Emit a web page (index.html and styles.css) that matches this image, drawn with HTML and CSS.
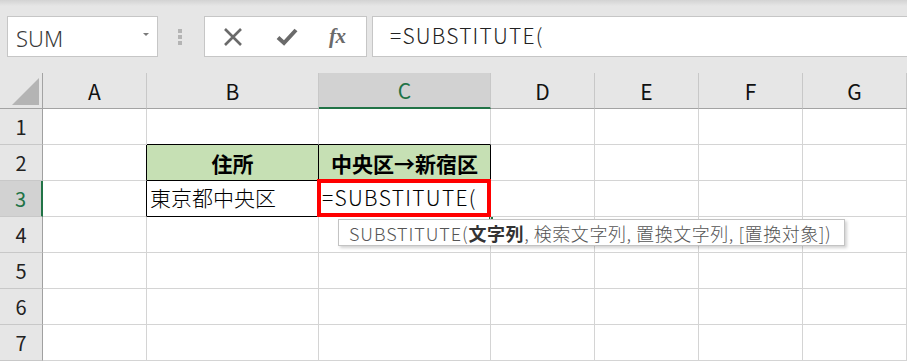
FILE: index.html
```html
<!DOCTYPE html>
<html lang="ja">
<head>
<meta charset="utf-8">
<title>SUBSTITUTE</title>
<link rel="stylesheet" href="styles.css">
</head>
<body>
<div class="app">
  <div class="toolbar">
    <div class="namebox"><span class="name">SUM</span><span class="dd"></span></div>
    <div class="grip"><i></i><i></i><i></i></div>
    <div class="fxbox">
      <svg class="ico" width="20" height="18" viewBox="0 0 20 18"><path d="M2 1 L18 17 M18 1 L2 17" stroke="#6a6a6a" stroke-width="2.6" fill="none"/></svg>
      <svg class="ico" width="22" height="18" viewBox="0 0 22 18"><path d="M2 9.5 L8 15 L20 2" stroke="#6a6a6a" stroke-width="4" fill="none" stroke-linejoin="miter"/></svg>
      <span class="fx">fx</span>
    </div>
    <div class="formula">=SUBSTITUTE(</div>
  </div>
  <div class="sheet">
    <div class="c hd corner"><div class="tri"></div></div>
    <div class="c hd">A</div>
    <div class="c hd">B</div>
    <div class="c hd sel">C</div>
    <div class="c hd">D</div>
    <div class="c hd">E</div>
    <div class="c hd">F</div>
    <div class="c hd">G</div>

    <div class="c rh">1</div>
    <div class="c"></div>
    <div class="c bb"></div>
    <div class="c bb"></div>
    <div class="c"></div><div class="c"></div><div class="c"></div><div class="c"></div>

    <div class="c rh">2</div>
    <div class="c br"></div>
    <div class="c tb th">住所</div>
    <div class="c tb th">中央区→新宿区</div>
    <div class="c"></div><div class="c"></div><div class="c"></div><div class="c"></div>

    <div class="c rh rsel">3</div>
    <div class="c br"></div>
    <div class="c tb td">東京都中央区</div>
    <div class="c tb td active"><span class="lat">=SUBSTITUTE(</span><span class="redbox"></span><span class="handle"></span></div>
    <div class="c"></div><div class="c"></div><div class="c"></div><div class="c"></div>

    <div class="c rh">4</div>
    <div class="c"></div><div class="c"></div><div class="c"></div><div class="c"></div><div class="c"></div><div class="c"></div><div class="c"></div>
    <div class="c rh">5</div>
    <div class="c"></div><div class="c"></div><div class="c"></div><div class="c"></div><div class="c"></div><div class="c"></div><div class="c"></div>
    <div class="c rh">6</div>
    <div class="c"></div><div class="c"></div><div class="c"></div><div class="c"></div><div class="c"></div><div class="c"></div><div class="c"></div>
    <div class="c rh">7</div>
    <div class="c"></div><div class="c"></div><div class="c"></div><div class="c"></div><div class="c"></div><div class="c"></div><div class="c"></div>

    <div class="tip"><span class="lat">SUBSTITUTE(</span><b>文字列</b>, 検索文字列, 置換文字列, [置換対象])</div>
  </div>
</div>
</body>
</html>
```
FILE: styles.css
```css
html, body {
  margin: 0;
  padding: 0;
  background: #e6e6e6;
  overflow: hidden;
}
.app {
  width: 907px;
  height: 361px;
  overflow: hidden;
  font-family: "Noto Sans CJK JP", "Noto Sans", sans-serif;
}
.toolbar {
  height: 73px;
  box-sizing: border-box;
  padding: 16px 0 0 7px;
  display: flex;
  align-items: flex-start;
  background: linear-gradient(#d3d3d3, #e6e6e6 6px);
}
.namebox {
  width: 151px;
  height: 41px;
  box-sizing: border-box;
  border: 1px solid #c6c6c6;
  background: #fff;
  display: flex;
  align-items: center;
  justify-content: space-between;
  padding: 0 8px 0 8px;
}
.name {
  font-family: "Noto Sans", sans-serif;
  font-size: 22px;
  font-weight: 300;
  color: #3a3a3a;
  line-height: 1;
  padding-top: 3px;
}
.dd {
  width: 0;
  height: 0;
  border-left: 3px solid transparent;
  border-right: 3px solid transparent;
  border-top: 3px solid #7a7a7a;
  margin-bottom: 4px;
}
.grip {
  margin-left: 20px;
  margin-top: 13px;
  display: flex;
  flex-direction: column;
  gap: 2px;
}
.grip i {
  display: block;
  width: 4px;
  height: 4px;
  background: #b4b4b4;
}
.fxbox {
  margin-left: 22px;
  width: 163px;
  height: 41px;
  box-sizing: border-box;
  border: 1px solid #c6c6c6;
  background: #fff;
  display: flex;
  align-items: center;
  padding-left: 18px;
}
.ico { display: block; }
.ico + .ico { margin-left: 33px; }
.fx {
  margin-left: 31px;
  font-family: "Liberation Serif", serif;
  font-style: italic;
  font-weight: bold;
  font-size: 21px;
  color: #6a6a6a;
  letter-spacing: -0.5px;
  line-height: 1;
}
.formula {
  margin-left: 5px;
  flex: 1;
  margin-right: -20px;
  height: 41px;
  box-sizing: border-box;
  border: 1px solid #c6c6c6;
  background: #fff;
  display: flex;
  align-items: center;
  padding-left: 17px;
  padding-bottom: 3px;
  font-size: 21px;
  font-weight: 300;
  letter-spacing: 1.2px;
  color: #222;
  line-height: 1;
}
.sheet {
  position: relative;
  display: grid;
  grid-template-columns: 43px 104px 172px 172px 104px 104px 104px 1fr;
  grid-auto-rows: 36px;
  background: #fff;
}
.c {
  box-sizing: border-box;
  border-right: 1px solid #d4d4d4;
  border-bottom: 1px solid #d4d4d4;
  display: flex;
  align-items: center;
  font-size: 21px;
  color: #000;
  white-space: nowrap;
  position: relative;
}
.hd {
  background: #e6e6e6;
  justify-content: center;
  border-right-color: #c8c8c8;
  border-bottom-color: #a3a3a3;
  color: #111;
  font-size: 21px;
}
.hd.sel {
  background: #d2d2d2;
  border-bottom: 2px solid #217346;
  color: #217346;
}
.corner {
  justify-content: flex-end;
  align-items: flex-end;
  padding: 0 3px 3px 0;
  border-right-color: #a3a3a3;
}
.tri {
  width: 27px;
  height: 27px;
  background: #b4b4b4;
  clip-path: polygon(100% 0, 100% 100%, 0 100%);
}
.rh {
  background: #e6e6e6;
  justify-content: center;
  border-right-color: #a0a0a0;
  border-bottom-color: #c8c8c8;
  font-size: 20px;
  color: #222;
}
.rh.rsel {
  background: #d2d2d2;
  border-right: 2px solid #217346;
  color: #217346;
}
.br { border-right-color: #000; }
.bb { border-bottom-color: #000; }
.tb {
  border-right-color: #000;
  border-bottom-color: #000;
}
.th {
  background: #c6e0b4;
  justify-content: center;
  font-weight: bold;
}
.td {
  padding-left: 3px;
  font-weight: 300;
  padding-bottom: 3px;
}
.lat {
  letter-spacing: 1.3px;
}
.redbox {
  position: absolute;
  left: -2px;
  top: -2px;
  right: -1px;
  bottom: -1px;
  border: 4px solid #ff0000;
}
.handle {
  position: absolute;
  right: -3px;
  bottom: -4px;
  width: 4px;
  height: 3px;
  background: #217346;
}
.tip {
  position: absolute;
  left: 338px;
  top: 146px;
  width: 507px;
  height: 27px;
  box-sizing: border-box;
  border: 1px solid #c3c3c3;
  background: #fff;
  box-shadow: 2px 2px 3px rgba(0,0,0,0.18);
  display: flex;
  align-items: center;
  padding-left: 10px;
  font-size: 18px;
  font-weight: 300;
  letter-spacing: 0.55px;
  color: #555;
  white-space: nowrap;
  line-height: 1;
}
.tip .lat {
  letter-spacing: 0.9px;
}
.tip b {
  font-weight: bold;
  color: #333;
}
```
